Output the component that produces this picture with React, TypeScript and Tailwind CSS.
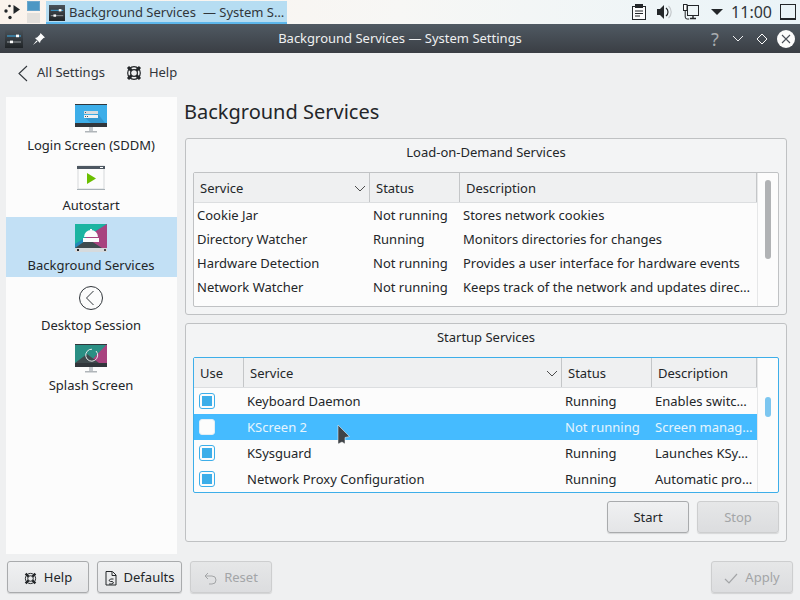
import React from "react";

const font = { fontFamily: '"Noto Sans", sans-serif' };

function AppIcon({ size }: { size: number }) {
  return (
    <svg width={size} height={size} viewBox="0 0 18 18" className="block">
      <defs>
        <linearGradient id={`ai${size}`} x1="0" y1="0" x2="0" y2="1">
          <stop offset="0" stopColor="#4a5259" />
          <stop offset="1" stopColor="#1f2326" />
        </linearGradient>
      </defs>
      <rect width="18" height="18" fill={`url(#ai${size})`} />
      <path d="M2 6h14" stroke="#3daee9" strokeWidth="1" />
      <path d="M2 12h14" stroke="#9a9fa3" strokeWidth="1" />
      <rect x="11" y="4.6" width="3" height="2.6" fill="#fcfcfc" />
      <rect x="5" y="10.6" width="3" height="2.6" fill="#fcfcfc" />
    </svg>
  );
}

function Lifebuoy({ size = 16, color = "#232629" }: { size?: number; color?: string }) {
  return (
    <svg width={size} height={size} viewBox="0 0 16 16" fill="none" className="block">
      <circle cx="8" cy="8" r="6.3" stroke={color} strokeWidth="1.2" />
      <circle cx="8" cy="8" r="3.4" stroke={color} strokeWidth="1.2" />
      <path d="M2 2 5.600 5.600M14 2 10.400 5.600M2 14 5.600 10.400M14 14 10.400 10.400" stroke={color} strokeWidth="3" />
    </svg>
  );
}

function Chevron({ className = "" }: { className?: string }) {
  return (
    <svg width="12" height="7" viewBox="0 0 12 7" fill="none" className={className}>
      <path d="M1 1 6 6 11 1" stroke="#4d4d4d" strokeWidth="1" />
    </svg>
  );
}

function Btn({ children, disabled, className = "" }: { children: React.ReactNode; disabled?: boolean; className?: string }) {
  return (
    <div
      className={`h-[32px] pt-[2px] flex items-center justify-center gap-[7px] rounded-[3px] border text-[13px] shadow-[0_1px_1px_rgba(0,0,0,0.12)] ${
        disabled
          ? "border-[#cdcecf] bg-gradient-to-b from-[#e6e7e8] to-[#dcdddf] text-[#a3a5a7]"
          : "border-[#a9abad] bg-gradient-to-b from-[#f0f1f2] to-[#e4e5e7] text-[#232629]"
      } ${className}`}
    >
      {children}
    </div>
  );
}

function SideItem({ icon, label, selected }: { icon: React.ReactNode; label: string; selected?: boolean }) {
  return (
    <div className={`h-[60px] flex flex-col items-center pt-[7px] pr-[1px] ${selected ? "bg-[#c2e0f5]" : ""}`}>
      <div className="w-[32px] h-[32px]">{icon}</div>
      <div className="text-[13px] leading-[18px] text-[#232629]">{label}</div>
    </div>
  );
}

const LoginIcon = (
  <svg width="32" height="32" viewBox="0 0 32 32" className="block">
    <rect y="0" width="32" height="23" fill="#3daee9" />
    <path d="M0 0h32v1H0z" fill="#31363b" />
    <path d="M9 13 16 19H30L23 10z" fill="#2f8fc4" opacity="0.7" />
    <path d="M0 19h32v4H0z" fill="#31363b" />
    <rect x="9" y="7" width="14" height="3" fill="#d9dcde" />
    <rect x="9" y="11" width="14" height="3" fill="#eff0f1" />
    <rect x="10" y="8" width="1" height="1" fill="#4d5761" />
    <rect x="10" y="12" width="1" height="1" fill="#4d5761" />
    <rect x="12" y="12" width="1" height="1" fill="#4d5761" />
    <rect x="14" y="23" width="4" height="4" fill="#c4c9cd" />
    <rect x="10" y="27" width="12" height="1.5" fill="#b0b5b9" />
  </svg>
);

const AutostartIcon = (
  <svg width="32" height="32" viewBox="0 0 32 32" className="block">
    <rect x="3" y="2" width="26" height="23" fill="#fcfcfc" stroke="#d5d8da" />
    <rect x="2" y="2" width="28" height="3" fill="#4d5761" />
    <rect x="25" y="3" width="3" height="1" fill="#fcfcfc" />
    <path d="M12 9 21 14.500 12 20z" fill="#6bbf00" />
    <path d="M2 25h28v1H2z" fill="#a7b0b6" />
  </svg>
);

const ServicesIcon = (
  <svg width="32" height="28" viewBox="0 0 32 28" className="block">
    <rect width="32" height="28" fill="#2288b8" />
    <path d="M0 0h32L0 20z" fill="#1abc9c" opacity="0.85" />
    <path d="M32 0v24H18L10 14z" fill="#a8437f" />
    <path d="M0 24 13 15 27 24z" fill="#3f4a4d" />
    <rect y="24" width="32" height="4" fill="#d6dadd" />
    <path d="M9 13a7 7 0 0 1 14 0z" fill="#fcfcfc" />
    <rect x="15" y="5" width="2" height="1.500" fill="#fcfcfc" />
    <rect x="8" y="14" width="16" height="4" fill="#fcfcfc" />
    <rect x="2" y="25" width="2" height="2" fill="#232629" />
    <rect x="29" y="25" width="2" height="2" fill="#4d4d4d" />
  </svg>
);

const SessionIcon = (
  <svg width="32" height="32" viewBox="0 0 32 32" fill="none" className="block">
    <circle cx="16" cy="14" r="11.500" stroke="#31363b" strokeWidth="1" />
    <path d="M18.500 7 11.500 14 18.500 21" stroke="#31363b" strokeWidth="1" />
  </svg>
);

const SplashIcon = (
  <svg width="32" height="32" viewBox="0 0 32 32" fill="none" className="block">
    <rect width="32" height="23" fill="#2a8f84" />
    <path d="M32 0v19H14z" fill="#a8437f" />
    <path d="M0 19 12 10 24 19z" fill="#3f4a4d" />
    <path d="M0 0h32v1H0z" fill="#31363b" />
    <path d="M0 19h32v4H0z" fill="#31363b" />
    <path d="M21 7a6 6 0 1 1-4-1.800" stroke="#e6e8ea" strokeWidth="1" />
    <rect x="14" y="23" width="4" height="4" fill="#c4c9cd" />
    <rect x="10" y="27" width="12" height="1.500" fill="#b0b5b9" />
  </svg>
);

function HeaderCell({ children, className = "", chevron }: { children: React.ReactNode; className?: string; chevron?: boolean }) {
  return (
    <div className={`relative h-full flex items-center pl-[6px] pt-[2px] border-r border-[#c4c6c8] ${className}`}>
      <span>{children}</span>
      {chevron && <Chevron className="ml-auto mr-[3px]" />}
    </div>
  );
}

function Check({ checked }: { checked: boolean }) {
  return (
    <div className={`w-[16px] h-[16px] rounded-[3px] border bg-[#fcfcfc] flex items-center justify-center ${checked ? "border-[#3daee9]" : "border-[#e3eef5]"}`}>
      {checked && <div className="w-[10px] h-[10px] bg-[#3daee9]" />}
    </div>
  );
}

function Group({ title, className = "", children }: { title: string; className?: string; children: React.ReactNode }) {
  return (
    <div className={`rounded-[3px] border border-[#bfc1c3] bg-[#f3f4f5] flex flex-col px-[7px] ${className}`}>
      <div className="text-center text-[13px] text-[#232629] leading-[18px] pt-[4px] h-[33px]">{title}</div>
      {children}
    </div>
  );
}

export default function App() {
  const rows1 = [
    ["Cookie Jar", "Not running", "Stores network cookies"],
    ["Directory Watcher", "Running", "Monitors directories for changes"],
    ["Hardware Detection", "Not running", "Provides a user interface for hardware events"],
    ["Network Watcher", "Not running", "Keeps track of the network and updates direc\u2026"],
  ];
  const rows2: [boolean, string, string, string, boolean][] = [
    [true, "Keyboard Daemon", "Running", "Enables switc\u2026", false],
    [false, "KScreen 2", "Not running", "Screen manag\u2026", true],
    [true, "KSysguard", "Running", "Launches KSy\u2026", false],
    [true, "Network Proxy Configuration", "Running", "Automatic pro\u2026", false],
  ];
  return (
    <div style={font} className="relative w-[800px] h-[600px] overflow-hidden flex flex-col bg-[#eff0f1] text-[#232629]">
      {/* taskbar */}
      <div className="h-[24px] flex items-center bg-gradient-to-r from-[#fbf3ec] via-[#f7f7f5] to-[#eaf4f8]">
        <svg width="24" height="24" viewBox="0 0 24 24" className="shrink-0">
          <circle cx="6" cy="11" r="1.700" fill="#232629" />
          <circle cx="9.500" cy="6" r="1.300" fill="#232629" />
          <circle cx="10" cy="17.500" r="1.700" fill="#232629" />
          <path d="M13.500 5 20 9.500 13.500 14z" fill="#232629" />
        </svg>
        <div className="w-[13px] ml-[3px] mr-[6px] flex flex-col shrink-0">
          <div className="h-[10px] bg-[#4c97c4] border border-[#6ba6cc]" />
          <div className="h-[10px] mt-[2px] bg-[#e3e0dc]" />
        </div>
        <div className="w-[241px] h-[23px] flex items-center bg-[#b6ddf2] border-b-[2px] border-[#5cb7ec] pl-[3px] pt-[4px] text-[13px] text-[#31363b] shrink-0">
          <AppIcon size={16} />
          <span className="ml-[4px]">Background Services</span>
          <span className="ml-[7px]">— System S…</span>
        </div>
        <div className="ml-auto flex items-center">
          <svg width="14" height="16" viewBox="0 0 14 16" fill="none" className="mr-[11px]">
            <rect x="0.500" y="2.500" width="13" height="13" fill="#fcfcfc" stroke="#232629" />
            <rect x="3" y="0" width="8" height="4" fill="#232629" />
            <path d="M3 7h8M3 9.500h8M3 12h5" stroke="#232629" />
          </svg>
          <svg width="16" height="16" viewBox="0 0 16 16" fill="none" className="mr-[10px]">
            <path d="M0 5h3l4-4v14l-4-4H0z" fill="#232629" />
            <path d="M9 4a5 5 0 0 1 0 8" stroke="#232629" strokeWidth="1.200" />
            <path d="M11.500 2a8 8 0 0 1 0 12" stroke="#c5c9cc" strokeWidth="1.200" />
          </svg>
          <svg width="16" height="16" viewBox="0 0 16 16" fill="none" className="mr-[12px]">
            <rect x="4.500" y="1.500" width="11" height="10" stroke="#232629" />
            <rect x="0.500" y="0.500" width="3.500" height="6" fill="#fcfcfc" stroke="#232629" />
            <path d="M2.200 7v6q0 2 2 2h2" stroke="#232629" />
            <path d="M7 14.500h6M10 12v2" stroke="#232629" strokeWidth="1.400" />
          </svg>
          <svg width="12" height="6" viewBox="0 0 12 6" className="mr-[8px]">
            <path d="M0 0h12L6 6z" fill="#232629" />
          </svg>
          <span className="text-[16px] leading-[24px] text-[#31363b] mr-[8px]">11:00</span>
          <div className="w-[16px] h-[16px] border border-[#232629] border-b-[2px] mr-[4px]" />
        </div>
      </div>
      {/* title bar */}
      <div className="h-[29px] flex items-center bg-gradient-to-b from-[#505a63] to-[#3a3e44]">
        <div className="ml-[5px]"><AppIcon size={18} /></div>
        <svg width="14" height="14" viewBox="0 0 14 14" className="ml-[9px]">
          <path d="M8.500 1 13 5.500 11.500 6 8.500 9 8 11 3 6 5 5.500 8 2.500zM4.500 8.500 1 13 5.500 9.500z" fill="#fcfcfc" />
        </svg>
        <div className="flex-1 text-center text-[13px] text-[#eff0f1] pl-[46px]">Background Services — System Settings</div>
        <div className="flex items-center mr-[5px]">
          <span className="text-[18px] leading-[20px] pt-[1px] text-[#a8acaf] w-[14px] text-center">?</span>
          <svg width="12" height="8" viewBox="0 0 12 8" fill="none" className="ml-[10px]">
            <path d="M1 1 6 6 11 1" stroke="#eff0f1" />
          </svg>
          <svg width="12" height="12" viewBox="0 0 12 12" fill="none" className="ml-[12px]">
            <path d="M6 1 11 6 6 11 1 6z" stroke="#fcfcfc" />
          </svg>
          <svg width="18" height="18" viewBox="0 0 18 18" className="ml-[9px]">
            <circle cx="9" cy="9" r="9" fill="#fcfcfc" />
            <path d="M5 5 13 13M13 5 5 13" stroke="#4a5058" strokeWidth="1.100" />
          </svg>
        </div>
      </div>
      {/* toolbar */}
      <div className="h-[44px] flex items-center pb-[4px] text-[13px] shrink-0">
        <svg width="11" height="17" viewBox="0 0 11 17" fill="none" className="ml-[17px]">
          <path d="M10 1 2 8.500 10 16" stroke="#31363b" strokeWidth="1.100" />
        </svg>
        <span className="ml-[9px] text-[#31363b]">All Settings</span>
        <div className="ml-[21px]"><Lifebuoy /></div>
        <span className="ml-[7px] text-[#31363b]">Help</span>
      </div>
      {/* body */}
      <div className="flex flex-1 min-h-0 pl-[6px] pr-[13px]">
        <div className="w-[171px] h-[457px] bg-[#fcfcfc] shrink-0">
          <SideItem icon={LoginIcon} label="Login Screen (SDDM)" />
          <SideItem icon={AutostartIcon} label="Autostart" />
          <SideItem icon={ServicesIcon} label="Background Services" selected />
          <SideItem icon={SessionIcon} label="Desktop Session" />
          <SideItem icon={SplashIcon} label="Splash Screen" />
        </div>
        <div className="ml-[8px] flex-1 min-w-0 flex flex-col">
          <div className="h-[41px] ml-[-1px] text-[20px] leading-[30px] text-[#232629]">Background Services</div>
          {/* group 1 */}
          <Group title="Load-on-Demand Services" className="h-[177px]">
            <div className="h-[135px] rounded-[2px] border border-[#c0c2c4] bg-[#fcfcfc] flex text-[13px]">
              <div className="w-[563px] flex flex-col">
                <div className="h-[30px] flex bg-[#eff0f1] border-b border-[#dcdee0]">
                  <HeaderCell className="w-[176px]" chevron>Service</HeaderCell>
                  <HeaderCell className="w-[90px]">Status</HeaderCell>
                  <HeaderCell className="w-[297px]">Description</HeaderCell>
                </div>
                {rows1.map((r) => (
                  <div key={r[0]} className="h-[24px] pt-[2px] flex items-center">
                    <div className="w-[176px] pl-[3px]">{r[0]}</div>
                    <div className="w-[90px] pl-[3px]">{r[1]}</div>
                    <div className="pl-[3px] whitespace-nowrap">{r[2]}</div>
                  </div>
                ))}
              </div>
              <div className="flex-1 border-l border-[#e6e7e8] pt-[7px] pl-[7px]">
                <div className="w-[6px] h-[79px] rounded-[3px] bg-[#b0b2b4]" />
              </div>
            </div>
          </Group>
          {/* group 2 */}
          <Group title="Startup Services" className="mt-[8px] h-[219px]">
            <div className="h-[136px] rounded-[2px] border border-[#3daee9] bg-[#fcfcfc] flex text-[13px]">
              <div className="w-[563px] flex flex-col">
                <div className="h-[30px] flex bg-[#eff0f1] border-b border-[#dcdee0]">
                  <HeaderCell className="w-[50px]">Use</HeaderCell>
                  <HeaderCell className="w-[318px]" chevron>Service</HeaderCell>
                  <HeaderCell className="w-[90px]">Status</HeaderCell>
                  <HeaderCell className="w-[105px]">Description</HeaderCell>
                </div>
                {rows2.map((r) => (
                  <div key={r[1]} className={`h-[26px] flex items-center whitespace-nowrap ${r[4] ? "bg-[#45bbff] text-[#e6f5fd]" : ""}`}>
                    <div className="w-[50px] pl-[5px]"><Check checked={r[0]} /></div>
                    <div className="w-[318px] pl-[3px] pt-[2px]">{r[1]}</div>
                    <div className="w-[90px] pl-[3px] pt-[2px]">{r[2]}</div>
                    <div className="pl-[3px] pt-[2px]">{r[3]}</div>
                  </div>
                ))}
              </div>
              <div className="flex-1 border-l border-[#e6e7e8] pt-[39px] pl-[7px]">
                <div className="w-[6px] h-[20px] rounded-[3px] bg-[#7cc6f0]" />
              </div>
            </div>
            <div className="flex justify-end gap-[8px] mt-[8px]">
              <Btn className="w-[82px]">Start</Btn>
              <Btn className="w-[82px]" disabled>Stop</Btn>
            </div>
          </Group>
        </div>
      </div>
      {/* bottom buttons */}
      <div className="h-[39px] flex px-[7px] gap-[8px] shrink-0 pb-[7px]">
        <Btn className="w-[82px]"><Lifebuoy size={13} />Help</Btn>
        <Btn className="w-[85px]">
          <svg width="12" height="15" viewBox="0 0 12 15" fill="none">
            <path d="M1 .5h6.500L11 4v10H1z" stroke="#232629" />
            <path d="M7 1v3.500h4" stroke="#232629" />
            <path d="M8.500 8H5.500L4 9.500 5.500 10.500H7.500L8.500 12 7 13H4" stroke="#232629" />
          </svg>
          Defaults
        </Btn>
        <Btn className="w-[82px]" disabled>
          <svg width="13" height="13" viewBox="0 0 13 13" fill="none">
            <path d="M1 4h7a4 4 0 0 1 0 8H5" stroke="#a3a5a7" />
            <path d="M4 1 1 4 4 7" stroke="#a3a5a7" />
          </svg>
          Reset
        </Btn>
        <Btn className="w-[82px] ml-auto" disabled>
          <svg width="14" height="11" viewBox="0 0 14 11" fill="none">
            <path d="M1 6 5 10 13 1" stroke="#a3a5a7" strokeWidth="1.200" />
          </svg>
          Apply
        </Btn>
      </div>
      {/* mouse cursor */}
      <svg width="14" height="21" viewBox="0 0 14 21" className="absolute left-[337px] top-[425px]">
        <path d="M1 0 12.500 11.500 8 12.500 8 19 5 17 1 19z" fill="#3f4347" stroke="#fcfcfc" strokeWidth="0.500" />
      </svg>
    </div>
  );
}
